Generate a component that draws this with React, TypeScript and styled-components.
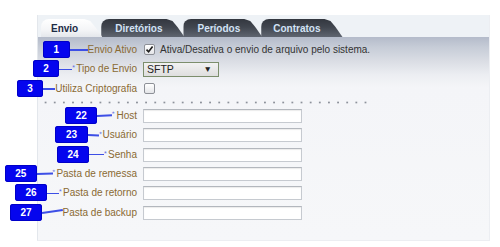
import React from "react";
import styled, { createGlobalStyle } from "styled-components";

const Global = createGlobalStyle`
  html, body { margin: 0; padding: 0; background: #ffffff; }
  body { font-family: "Liberation Sans", Arial, sans-serif; }
`;

const Page = styled.div`
  width: 500px;
  height: 247px;
  box-sizing: border-box;
  padding: 15px 10px 6px 37px;
`;

const Panel = styled.div`
  width: 453px;
  height: 226px;
  display: flex;
  flex-direction: column;
  box-sizing: border-box;
  border-left: 1px solid #e3e7ec;
  border-right: 1px solid #eceef2;
  border-bottom: 1px solid #eceef2;
`;

const TabStrip = styled.div`
  height: 22px;
  box-sizing: border-box;
  padding: 4px 0 0 3px;
  background: #eef2f6;
  display: flex;
  align-items: flex-end;
`;

const Tab = styled.div<{ $active?: boolean; $z: number; $padL: number }>`
  position: relative;
  z-index: ${(p) => p.$z};
  height: 18px;
  line-height: 19px;
  margin-left: ${(p) => (p.$active ? 0 : -1)}px;
  padding: 0 ${(p) => (p.$active ? 24 : 22)}px 0 ${(p) => p.$padL}px;
  font-size: 10px;
  font-weight: bold;
  white-space: nowrap;
  border-radius: 8px 0 0 0;
  clip-path: polygon(0 0, calc(100% - 18px) 0, calc(100% - 12px) 2px, calc(100% - 7px) 8px, 100% 100%, 0 100%);
  color: ${(p) => (p.$active ? "#1c2a44" : "#d3e3f6")};
  background: ${(p) =>
    p.$active
      ? "linear-gradient(180deg, #ffffff 0%, #f4f5f7 60%, #e4e7ec 100%)"
      : "linear-gradient(180deg, #33373f 0%, #41464f 45%, #5f6570 100%)"};
`;

const Body = styled.div`
  flex: 1;
  padding-top: 3px;
  background: linear-gradient(
    180deg,
    #b4bbca 0px,
    #c6ccd7 10px,
    #dadde4 24px,
    #eceef2 38px,
    #f4f5f8 50px,
    #f6f7f9 100%
  );
`;

const Row = styled.div<{ $h: number }>`
  height: ${(p) => p.$h}px;
  display: grid;
  grid-template-columns: 99px auto;
  column-gap: 6px;
  align-items: center;
`;

const LabelCell = styled.div`
  display: flex;
  justify-content: flex-end;
  align-items: center;
  white-space: nowrap;
`;

const LabelText = styled.span`
  font-size: 10px;
  color: #8a6a33;
  line-height: 12px;
`;

const Badge = styled.span`
  flex: none;
  height: 17px;
  line-height: 17px;
  padding: 0 10.5px;
  margin-top: -1px;
  border-radius: 3px;
  background: #0505ee;
  box-shadow: inset 0 0 0 1px #0000c8;
  color: #ffffff;
  font-size: 10px;
  font-weight: bold;
  text-align: center;
`;

const Connector = styled.span<{ $w: number; $tilt: number }>`
  flex: none;
  width: ${(p) => p.$w}px;
  display: flex;
  align-items: center;
  transform: rotate(${(p) => p.$tilt}deg);
  transform-origin: left center;
`;

const Line = styled.span`
  flex: 1;
  height: 1.5px;
  background: #3d4fe6;
`;

const Star = styled.span`
  flex: none;
  width: 4px;
  font-size: 7px;
  line-height: 7px;
  margin-top: -3px;
  color: #5d6de0;
`;

const FieldCell = styled.div`
  display: flex;
  align-items: center;
`;

const Check = styled.span<{ $checked?: boolean }>`
  width: 11px;
  height: 11px;
  box-sizing: border-box;
  margin-left: 1px;
  border: 1px solid #8d9097;
  border-radius: 2px;
  background: linear-gradient(180deg, #ffffff 0%, #e4e5e8 100%);
  display: flex;
  align-items: center;
  justify-content: center;
`;

const Hint = styled.span`
  margin-left: 5px;
  font-size: 10px;
  color: #333333;
`;

const Select = styled.div`
  width: 76px;
  height: 15px;
  box-sizing: border-box;
  border: 1px solid #7c8e6c;
  background: linear-gradient(180deg, #f2f2f2 0%, #dedede 100%);
  display: flex;
  align-items: center;
  justify-content: space-between;
  padding: 0 6px 0 3px;
  font-size: 10.5px;
  color: #222222;
`;

const Caret = styled.span`
  font-size: 8.5px;
  color: #222222;
`;

const TextInput = styled.div`
  width: 159px;
  height: 14px;
  box-sizing: border-box;
  border: 1px solid #c6cad0;
  border-top-color: #b3b7bd;
  background: #ffffff;
  box-shadow: inset 0 1px 1px rgba(0, 0, 0, 0.08);
`;

const Dots = styled.div`
  margin: 2px 0 3px 3px;
  width: 326px;
  height: 3px;
  background-image: radial-gradient(circle, #8d929b 0.7px, transparent 1.3px);
  background-size: 9.15px 3px;
  background-position: 0 0;
`;

type Note = { n: string; w: number; star?: boolean; tilt?: number };

function Label({ text, note }: { text: string; note: Note }) {
  return (
    <LabelCell>
      <Badge>{note.n}</Badge>
      <Connector $w={note.w} $tilt={note.tilt ?? 0}>
        <Line />
        {note.star && <Star>*</Star>}
      </Connector>
      <LabelText>{text}</LabelText>
    </LabelCell>
  );
}

const CheckMark = () => (
  <svg width="9" height="9" viewBox="0 0 9 9">
    <path d="M1.5 4.6 L3.6 6.8 L7.6 1.4" fill="none" stroke="#1e1e1e" strokeWidth="1.6" />
  </svg>
);

const inputs: { text: string; note: Note }[] = [
  { text: "Host", note: { n: "22", w: 19, star: true, tilt: -3 } },
  { text: "Usuário", note: { n: "23", w: 15, star: true, tilt: 3 } },
  { text: "Senha", note: { n: "24", w: 19, star: true } },
  { text: "Pasta de remessa", note: { n: "25", w: 19.5, star: true, tilt: -2 } },
  { text: "Pasta de retorno", note: { n: "26", w: 16, star: true } },
  { text: "Pasta de backup", note: { n: "27", w: 20.5, tilt: -8 } },
];

export default function App() {
  return (
    <>
      <Global />
      <Page>
        <Panel>
          <TabStrip>
            <Tab $active $z={5} $padL={10}>Envio</Tab>
            <Tab $z={4} $padL={14}>Diretórios</Tab>
            <Tab $z={3} $padL={14}>Períodos</Tab>
            <Tab $z={2} $padL={12}>Contratos</Tab>
          </TabStrip>
          <Body>
            <Row $h={19.5}>
              <Label text="Envio Ativo" note={{ n: "1", w: 18 }} />
              <FieldCell>
                <Check $checked>
                  <CheckMark />
                </Check>
                <Hint>Ativa/Desativa o envio de arquivo pelo sistema.</Hint>
              </FieldCell>
            </Row>
            <Row $h={19.5}>
              <Label text="Tipo de Envio" note={{ n: "2", w: 17, star: true }} />
              <FieldCell>
                <Select>
                  <span>SFTP</span>
                  <Caret>▼</Caret>
                </Select>
              </FieldCell>
            </Row>
            <Row $h={19.5}>
              <Label text="Utiliza Criptografia" note={{ n: "3", w: 12 }} />
              <FieldCell>
                <Check />
              </FieldCell>
            </Row>
            <Dots />
            {inputs.map((r) => (
              <Row key={r.text} $h={19.3}>
                <Label text={r.text} note={r.note} />
                <FieldCell>
                  <TextInput />
                </FieldCell>
              </Row>
            ))}
          </Body>
        </Panel>
      </Page>
    </>
  );
}
